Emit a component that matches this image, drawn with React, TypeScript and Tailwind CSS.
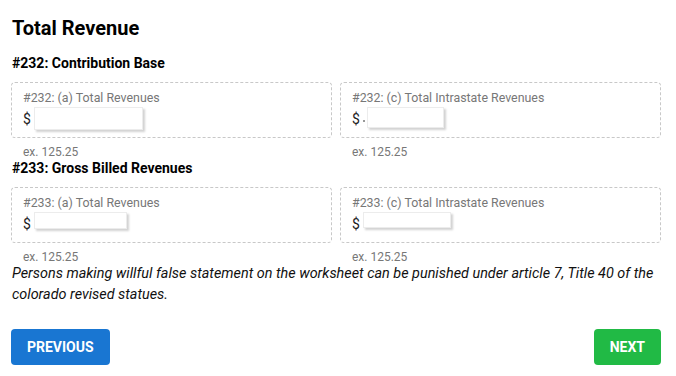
const fields = [
  {
    heading: "#232: Contribution Base",
    items: [
      { label: "#232: (a) Total Revenues", w: "w-[109px]", h: "h-[23px]", mark: false },
      { label: "#232: (c) Total Intrastate Revenues", w: "w-[77px]", h: "h-[21px]", mark: true },
    ],
  },
  {
    heading: "#233: Gross Billed Revenues",
    items: [
      { label: "#233: (a) Total Revenues", w: "w-[93px]", h: "h-[17px]", mark: false },
      { label: "#233: (c) Total Intrastate Revenues", w: "w-[88px]", h: "h-[16px]", mark: false },
    ],
  },
];

function MoneyField({
  label,
  w,
  h,
  mark,
}: {
  label: string;
  w: string;
  h: string;
  mark: boolean;
}) {
  return (
    <div>
      <div className="border border-dashed border-[#c8c8c8] rounded-[4px] px-[11px] pt-[7px] pb-[6px]">
        <div className="text-[12.4px] leading-4 text-[#777]">{label}</div>
        <div className="flex items-start h-[24px] mt-[1px]">
          <span className="text-[14px] leading-[20px] text-[#222] mt-[2px]">$</span>
          {mark && <span className="w-[2px] h-[2px] bg-[#999] mt-[13px] ml-[3px]" />}
          <input
            className={`${w} ${h} ${mark ? "ml-[2px]" : "ml-[3px]"} bg-white border border-[#ececec] shadow-[2px_2px_2px_rgba(0,0,0,0.18)] outline-none`}
          />
        </div>
      </div>
      <div className="text-[12px] leading-[14px] text-[#777] pl-[12px] mt-[7px]">
        ex. 125.25
      </div>
    </div>
  );
}

export default function App() {
  return (
    <div className="w-[676px] h-[376px] bg-white pl-[11px] pr-[15px] pt-[14px] font-['Roboto',sans-serif] text-black">
      <h1 className="text-[20px] leading-7 font-bold pl-[1px]">Total Revenue</h1>

      {fields.map((f, i) => (
        <div key={f.heading} className={i === 0 ? "mt-[11px]" : "mt-[-1px]"}>
          <h2 className="text-[14px] leading-5 font-bold pl-[1px]">{f.heading}</h2>
          <div className="grid grid-cols-2 gap-x-[8px] mt-[9px]">
            {f.items.map((it) => (
              <MoneyField key={it.label} {...it} />
            ))}
          </div>
        </div>
      ))}

      <p className="italic text-[14.4px] leading-[21px] text-[#111] pl-[1px] mt-[-1px]">
        Persons making willful false statement on the worksheet can be punished under article 7, Title 40 of the colorado revised statues.
      </p>

      <div className="flex justify-between mt-[24px]">
        <button className="h-[36px] px-4 rounded-[4px] bg-[#1976d2] text-white text-[14px] font-bold uppercase">
          Previous
        </button>
        <button className="h-[36px] px-4 rounded-[4px] bg-[#21ba45] text-white text-[14px] font-bold uppercase">
          Next
        </button>
      </div>
    </div>
  );
}
